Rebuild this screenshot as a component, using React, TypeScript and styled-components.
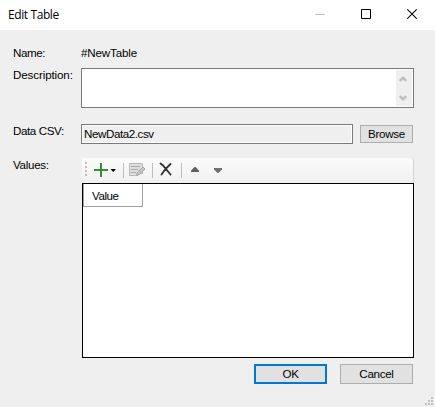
import React from "react";
import styled, { createGlobalStyle } from "styled-components";

const GlobalStyle = createGlobalStyle`
  * { box-sizing: border-box; }
  html, body { margin: 0; padding: 0; }
  body { overflow: hidden; }
`;

const Dialog = styled.div`
  display: flex;
  flex-direction: column;
  width: 435px;
  height: 407px;
  background: #efefef;
  color: #000;
  font: 11.6px/11px "Liberation Sans", Arial, sans-serif;
`;

const TitleBar = styled.header`
  display: flex;
  align-items: center;
  height: 30px;
  flex: none;
  background: #fff;
`;

const Title = styled.h1`
  flex: 1;
  margin: 0;
  padding-left: 8px;
  font: 400 12px/16px "Open Sans", "Noto Sans", sans-serif;
  letter-spacing: -0.4px;
`;

const CaptionButton = styled.button`
  display: flex;
  width: 46px;
  height: 30px;
  padding: 8px 0 0 18px;
  border: 0;
  background: transparent;
`;

const Row = styled.div<{ $height: number }>`
  display: flex;
  align-items: flex-start;
  flex: none;
  height: ${(p) => p.$height}px;
`;

const Form = styled.main`
  display: flex;
  flex-direction: column;
  flex: 1;
  padding: 16px 21px 0 13px;
`;

const Label = styled.div<{ $width?: number }>`
  flex: none;
  width: ${(p) => p.$width ?? 68}px;
  padding-top: 1px;
`;

const Text = styled.span<{ $spacing?: number }>`
  letter-spacing: ${(p) => p.$spacing ?? -0.3}px;
  white-space: nowrap;
`;

const DescriptionBox = styled.div`
  display: flex;
  justify-content: flex-end;
  width: 333px;
  height: 40px;
  padding: 1px;
  border: 1px solid #7a7a7a;
  background: #fff;
`;

const ScrollBar = styled.div`
  display: flex;
  flex-direction: column;
  justify-content: space-between;
  width: 16px;
  height: 36px;
  padding: 6px 5px 5px 3px;
  background: #efefef;
`;

const PathField = styled.div`
  width: 272px;
  height: 20px;
  margin-right: 7px;
  padding: 3px 2px;
  border: 1px solid #7a7a7a;
  box-shadow: inset 0 0 0 1px #fff;
`;

const Button = styled.button<{ $width: number; $height: number; $primary?: boolean }>`
  display: flex;
  align-items: center;
  justify-content: center;
  width: ${(p) => p.$width}px;
  height: ${(p) => p.$height}px;
  padding: 0 0 2px;
  border: ${(p) => (p.$primary ? "2px solid #0078d7" : "1px solid #adadad")};
  background: #e1e1e1;
  color: #000;
  font: inherit;
`;

const BrowseButton = styled(Button)`
  margin-top: 1px;
`;

const Editor = styled.section`
  width: 332px;
`;

const Toolbar = styled.div`
  display: flex;
  align-items: center;
  height: 25px;
  border-radius: 3px 3px 0 0;
  border-right: 1px solid #d4d4d4;
  background: linear-gradient(#fcfcfc, #f0f0f0);
`;

const Grid = styled.div`
  height: 175px;
  border: 1px solid #000;
  background: #fff;
`;

const HeaderCell = styled.div`
  width: 60px;
  height: 23px;
  padding: 6px 0 0 9px;
  border: solid #a0a0a0;
  border-width: 0 1px 1px 0;
  box-shadow: inset 1px 0 #a0a0a0;
`;

const Actions = styled.footer`
  display: flex;
  justify-content: flex-end;
  gap: 13px;
  padding: 6px 1px 0 0;
`;

const GripArea = styled.div`
  display: flex;
  justify-content: flex-end;
  flex: none;
  height: 10px;
  padding-right: 2px;
`;

const Icon = styled.svg`
  display: block;
  flex: none;
`;

const ToolbarIcons = () => (
  <Icon width="150" height="25" viewBox="0 0 150 25">
    <path d="M3 4h2v2h-2zM3 8h2v2h-2zM3 12h2v2h-2zM3 16h2v2h-2z" fill="#bdbdbd" />
    <path d="M12 12h14M19 5v14" stroke="#388c38" strokeWidth="2" />
    <path d="M28.500 11h5.500l-2.750 3z" fill="#000" />
    <path d="M41.500 5v15M70.500 5v15M99.500 5v15" stroke="#bdbdbd" />
    <path d="M47.500 5.500h13v10h-5l-2 2h-6z" fill="#dedede" stroke="#b8b8b8" />
    <path d="M49 8.500h9M49 11.500h7M49 14.500h5" stroke="#aaa" />
    <path d="M54.500 17.500l1-3 5.500-5.500 2 2-5.500 5.500z" fill="#c8c8c8" stroke="#a0a0a0" />
    <path d="M78.500 5.500l2.500 2 7.500 9M88.500 6l-5 5-4 5.500" fill="none" stroke="#333" strokeWidth="1.900" strokeLinecap="round" />
    <path d="M109 14v-1.500L112.500 9h1l3.500 3.500V14z" fill="#606060" />
    <path d="M132 10v1.500l3.500 3.500h1l3.500-3.500V10z" fill="#707070" />
  </Icon>
);

export default function App() {
  return (
    <>
      <GlobalStyle />
      <Dialog>
        <TitleBar>
          <Title>Edit Table</Title>
          <CaptionButton aria-label="Minimize">
            <Icon width="12" height="12"><path d="M0 6.500h10" stroke="#c4c4c4" /></Icon>
          </CaptionButton>
          <CaptionButton aria-label="Maximize">
            <Icon width="12" height="12"><path d="M.5 1.500h9v9h-9z" fill="none" stroke="#000" /></Icon>
          </CaptionButton>
          <CaptionButton aria-label="Close">
            <Icon width="12" height="12"><path d="M.3 1.300l9.400 9.400M9.700 1.300L.3 10.700" stroke="#000" strokeWidth="1.100" /></Icon>
          </CaptionButton>
        </TitleBar>
        <Form>
          <Row $height={22}>
            <Label><Text $spacing={-0.45}>Name:</Text></Label>
            <Label $width={100}><Text $spacing={-0.15}>#NewTable</Text></Label>
          </Row>
          <Row $height={56}>
            <Label><Text $spacing={-0.12}>Description:</Text></Label>
            <DescriptionBox>
              <ScrollBar>
                <Icon width="8" height="6"><path d="M.8 5L4 1.800 7.200 5" fill="none" stroke="#bfbfbf" strokeWidth="2.400" /></Icon>
                <Icon width="8" height="6"><path d="M.8 1L4 4.200 7.200 1" fill="none" stroke="#bfbfbf" strokeWidth="2.400" /></Icon>
              </ScrollBar>
            </DescriptionBox>
          </Row>
          <Row $height={34}>
            <Label><Text $spacing={-0.4}>Data CSV:</Text></Label>
            <PathField><Text $spacing={-0.42}>NewData2.csv</Text></PathField>
            <BrowseButton $width={53} $height={18}><Text>Browse</Text></BrowseButton>
          </Row>
          <Row $height={200}>
            <Label $width={69}><Text>Values:</Text></Label>
            <Editor>
              <Toolbar><ToolbarIcons /></Toolbar>
              <Grid><HeaderCell><Text $spacing={-0.45}>Value</Text></HeaderCell></Grid>
            </Editor>
          </Row>
          <Actions>
            <Button $width={73} $height={20} $primary><Text>OK</Text></Button>
            <Button $width={73} $height={20}><Text>Cancel</Text></Button>
          </Actions>
        </Form>
        <GripArea>
          <Icon width="8" height="8">
            <path d="M6 0h2v2H6zM3 3h2v2H3zM6 3h2v2H6zM0 6h2v2H0zM3 6h2v2H3zM6 6h2v2H6z" fill="#bfbfbf" />
          </Icon>
        </GripArea>
      </Dialog>
    </>
  );
}
